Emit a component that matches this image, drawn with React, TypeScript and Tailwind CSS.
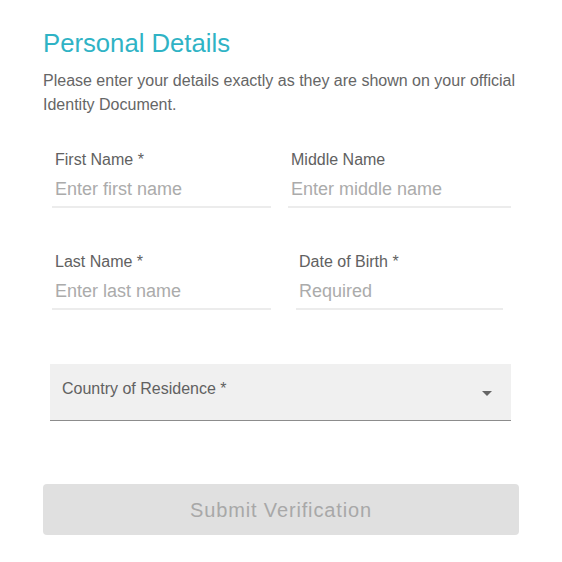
import React from "react";

function Field({ label, placeholder, className }: { label: string; placeholder: string; className: string }) {
  return (
    <div className={className}>
      <div className="pl-[3px] text-[16px] leading-[20px] text-[#616161]">{label}</div>
      <div className="mt-[7px] pl-[3px] text-[18px] leading-[24px] text-[#ababab]">{placeholder}</div>
      <div className="mt-[5px] h-[2px] bg-[#ececec]" />
    </div>
  );
}

export default function App() {
  return (
    <div className="w-[562px] h-[562px] bg-white font-['Liberation_Sans']">
      <div className="pl-[43px] pt-[28px]">
        <h1 className="text-[25.7px] leading-[30px] text-[#2fb3c5]">Personal Details</h1>
        <p className="mt-[11px] w-[490px] text-[16px] leading-[24px] text-[#666666]">
          Please enter your details exactly as they are shown on your official Identity Document.
        </p>
      </div>
      <div className="mt-[33px] flex">
        <Field label="First Name *" placeholder="Enter first name" className="ml-[52px] w-[219px]" />
        <Field label="Middle Name" placeholder="Enter middle name" className="ml-[17px] w-[223px]" />
      </div>
      <div className="mt-[44px] flex">
        <Field label="Last Name *" placeholder="Enter last name" className="ml-[52px] w-[219px]" />
        <Field label="Date of Birth *" placeholder="Required" className="ml-[25px] w-[207px]" />
      </div>
      <div className="mt-[54px] ml-[50px] w-[461px] h-[57px] bg-[#f0f0f0] border-b border-[#8c8c8c] flex items-start justify-between pl-[12px] pr-[19px] pt-[15px]">
        <span className="text-[16px] leading-[20px] text-[#616161]">Country of Residence *</span>
        <svg width="10" height="5" viewBox="0 0 10 5" className="mt-[12px]">
          <path d="M0 0 L10 0 L5 5 Z" fill="#666666" />
        </svg>
      </div>
      <div className="mt-[63px] ml-[43px] w-[476px] h-[51px] rounded-[4px] bg-[#e0e0e0] flex items-center justify-center">
        <span className="text-[20px] tracking-[0.85px] text-[#a8a8a8]">Submit Verification</span>
      </div>
    </div>
  );
}
